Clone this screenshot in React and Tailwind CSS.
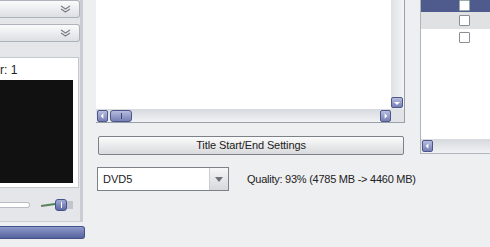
import React from 'react';

const font = { fontFamily: '"Liberation Sans", Arial, sans-serif' };

const Chevrons = () => (
  <svg width="11" height="8" viewBox="0 0 11 8" className="text-[#7b8089]">
    <path d="M1 1l4.5 3 4.5-3M1 4l4.5 3 4.5-3" fill="none" stroke="currentColor" strokeWidth="1.3" />
  </svg>
);

const ArrowBtn = ({ dir, className = '' }) => {
  const paths = {
    left: 'M6 2L3 5l3 3z',
    right: 'M4 2l3 3-3 3z',
    down: 'M2 4h6L5 7z',
  };
  return (
    <div
      className={`flex items-center justify-center rounded-[2px] border border-[#4e5788] bg-gradient-to-b from-[#b6bde0] to-[#7680b4] ${className}`}
    >
      <svg width="10" height="10" viewBox="0 0 10 10">
        <path d={paths[dir]} fill="#fff" />
      </svg>
    </div>
  );
};

const Dropdown = () => (
  <div className="flex h-[18px] w-[80px] items-center justify-end rounded-r-[3px] border border-l-0 border-[#aeb3bb] bg-gradient-to-b from-[#fbfbfc] to-[#dcdfe4] pr-[8px]">
    <Chevrons />
  </div>
);

export default function App() {
  return (
    <div style={font} className="flex h-[247px] w-[490px] overflow-hidden bg-[#eeeff1] text-[11px] text-[#222]">
      {/* left panel */}
      <div className="flex w-[86px] shrink-0 flex-col">
        <div className="flex h-[222px] w-[83px] flex-col border-r-[3px] border-b border-[#c9ccd2] bg-[#e4e6e9]">
          <Dropdown />
          <div className="mt-[6px]">
            <Dropdown />
          </div>
          <div className="mt-[15px] flex h-[131px] w-[79px] flex-col border border-l-0 border-[#c4c7cc] bg-white">
            <div className="pt-[4px] text-[12px] leading-[16px]">r: 1</div>
            <div className="mt-[2px] h-[103px] w-[73px] bg-[#111]" />
          </div>
          <div className="mt-[11px] flex items-center">
            <div className="h-[6px] w-[30px] rounded-r-full border border-l-0 border-[#b8bcc3] bg-white" />
            <div className="ml-[11px] h-[2px] w-[14px] rotate-[-8deg] bg-gradient-to-r from-[#6a7a6a] to-[#3d8a4a]" />
            <div className="flex h-[12px] w-[12px] items-center justify-center rounded-[3px] border border-[#46508a] bg-gradient-to-b from-[#a3acd8] to-[#5e68a4]">
              <div className="h-[6px] w-[1px] bg-white" />
            </div>
            <div className="h-[8px] w-[6px] bg-[#c2c5cb]" />
          </div>
        </div>
        <div className="mt-[4px] h-[13px] w-[85px] rounded-r-[3px] border border-l-0 border-[#44508a] bg-gradient-to-b from-[#8f9acb] to-[#56629c]" />
      </div>

      {/* middle */}
      <div className="ml-[10px] flex w-[309px] shrink-0 flex-col">
        <div className="flex h-[123px] flex-col border-r border-b border-[#9aa0a8] bg-white">
          <div className="flex flex-1">
            <div className="flex-1" />
            <div className="flex w-[13px] flex-col justify-end bg-gradient-to-r from-[#dfe1e5] to-[#f3f4f6] pb-[1px]">
              <ArrowBtn dir="down" className="h-[11px] w-[12px]" />
            </div>
          </div>
          <div className="flex h-[13px] items-center bg-gradient-to-b from-[#d6d9de] to-[#f1f2f4]">
            <ArrowBtn dir="left" className="ml-[1px] h-[12px] w-[11px]" />
            <div className="ml-[2px] flex h-[12px] w-[22px] items-center justify-center rounded-[3px] border border-[#4e5788] bg-gradient-to-b from-[#b6bde0] to-[#7680b4]">
              <div className="h-[6px] w-[1px] bg-[#3e4676]" />
            </div>
            <div className="flex-1" />
            <ArrowBtn dir="right" className="h-[12px] w-[11px]" />
            <div className="h-[13px] w-[13px] bg-[#e2e3e6]" />
          </div>
        </div>
        <button className="ml-[2px] mt-[13px] h-[19px] w-[306px] rounded-[2px] border border-[#7d8188] bg-gradient-to-b from-[#fbfbfb] to-[#d9dadd] text-[11px] leading-[17px] tracking-[-0.1px] text-[#222]">
          Title Start/End Settings
        </button>
        <div className="mt-[12px] flex items-center">
          <div className="ml-[1px] flex h-[24px] w-[132px] shrink-0 items-center border border-[#7d8188] bg-white">
            <span className="flex-1 pl-[5px] text-[11px]">DVD5</span>
            <div className="flex h-[22px] w-[19px] items-center justify-center border-l border-[#c9ccd1] bg-gradient-to-b from-[#f6f6f7] to-[#d6d8dc]">
              <svg width="8" height="5" viewBox="0 0 8 5">
                <path d="M0 0h8L4 5z" fill="#6e737b" />
              </svg>
            </div>
          </div>
          <span className="ml-[18px] whitespace-nowrap text-[11px] tracking-[-0.25px]">Quality: 93% (4785 MB -&gt; 4460 MB)</span>
        </div>
      </div>

      {/* right */}
      <div className="ml-[15px] flex w-[70px] shrink-0 flex-col">
        <div className="flex h-[154px] flex-col border-l border-b border-[#b0b4bb] bg-white">
          <div className="flex h-[12px] items-center bg-[#4f5b8c] pl-[38px]">
            <div className="-mt-[2px] h-[11px] w-[11px] rounded-[1px] border border-[#99aaaa] bg-white" />
          </div>
          <div className="flex h-[17px] items-center bg-[#e0e1e3] pl-[38px]">
            <div className="h-[11px] w-[11px] rounded-[1px] border border-[#8a8d93] bg-white" />
          </div>
          <div className="flex h-[17px] items-center pl-[38px]">
            <div className="h-[11px] w-[11px] rounded-[1px] border border-[#8a8d93] bg-white" />
          </div>
          <div className="flex-1" />
          <div className="flex h-[14px] items-center bg-gradient-to-b from-[#d6d9de] to-[#f1f2f4]">
            <ArrowBtn dir="left" className="ml-[1px] h-[12px] w-[11px]" />
          </div>
        </div>
      </div>
    </div>
  );
}
